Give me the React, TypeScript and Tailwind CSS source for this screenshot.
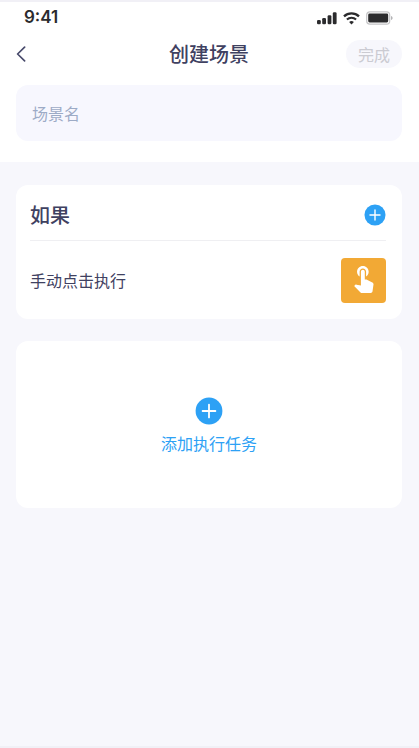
import { useState } from 'react';

function StatusIcons() {
  return (
    <div className="flex items-center gap-1.5 text-[#2b2b2d]">
      <svg width="20" height="14" viewBox="0 0 20 14" fill="currentColor" aria-hidden="true">
        <rect x="0" y="9" width="3.8" height="4.2" rx="1.3" />
        <rect x="5.2" y="7" width="3.8" height="6.2" rx="1.3" />
        <rect x="10.6" y="4.2" width="3.8" height="9" rx="1.3" />
        <rect x="15.800" y="1.2" width="3.8" height="12" rx="1.3" />
      </svg>
      <svg width="17" height="14" viewBox="0 0 17 14" fill="none" stroke="currentColor" aria-hidden="true">
        <path d="M1 5.300a11 11 0 0 1 15 0" strokeWidth="2.300" />
        <path d="M3.900 8.600a6.800 6.800 0 0 1 9.200 0" strokeWidth="2.100" />
        <path d="M8.500 13.400 6.100 11a3.600 3.600 0 0 1 4.800 0Z" fill="currentColor" stroke="none" />
      </svg>
      <svg width="28" height="14" viewBox="0 0 28 14" aria-hidden="true">
        <rect x="0.7" y="0.9" width="23" height="12.2" rx="3.2" fill="none" stroke="#c4c4c6" strokeWidth="1.2" />
        <rect x="2.2" y="2.6" width="20" height="8.8" rx="1.4" fill="currentColor" />
        <path d="M25 5v4c.9-.4 1.600-1.100 1.600-2S25.900 5.400 25 5Z" fill="#b4b4b6" />
      </svg>
    </div>
  );
}

function PlusIcon({ className }: { className: string }) {
  return (
    <svg className={className} viewBox="0 0 28 28" aria-hidden="true">
      <circle cx="14" cy="14" r="13.4" fill="#2da1f5" />
      <path d="M14 7.600v12.800M7.600 14h12.800" stroke="#fff" strokeWidth="1.800" strokeLinecap="round" />
    </svg>
  );
}

function TapIcon() {
  return (
    <svg className="size-[31px]" viewBox="0 0 24 24" fill="#fff" aria-hidden="true">
      <path d="M9 11.240V7.500C9 6.120 10.120 5 11.500 5S14 6.120 14 7.500v3.740c1.210-.81 2-2.180 2-3.740C16 5.010 13.990 3 11.500 3S7 5.010 7 7.500c0 1.560.79 2.930 2 3.740zm9.840 4.630l-4.540-2.260c-.17-.07-.35-.11-.54-.11H13v-6c0-.83-.67-1.500-1.500-1.500S10 6.670 10 7.500v10.740l-3.430-.72c-.08-.01-.15-.03-.24-.03-.31 0-.59.13-.79.33l-.79.8 4.940 4.940c.27.27.65.44 1.060.44h6.790c.75 0 1.330-.55 1.440-1.280l.75-5.270c.01-.07.02-.14.02-.2 0-.62-.38-1.160-.91-1.380z" />
    </svg>
  );
}

export default function App() {
  const [name, setName] = useState('');

  return (
    <div className="flex min-h-screen flex-col border-y-2 border-[#f1f0f6] bg-[#f7f7fc] font-['Noto_Sans_CJK_SC',sans-serif] text-[#3f4161]">
      <header className="bg-white pr-[17px] pb-[21px] pl-4">
        <div className="flex h-8 items-center justify-between pr-2 pl-2">
          <span className="font-['Inter',sans-serif] text-[17px] font-semibold text-[#2b2b2d]">9:41</span>
          <StatusIcons />
        </div>

        <div className="grid h-10 grid-cols-3 items-center">
          <button type="button" aria-label="返回" className="flex h-8 w-8 items-center">
            <svg width="10" height="16" viewBox="0 0 10 16" fill="none" aria-hidden="true">
              <path d="M8.600 1.200 1.600 8l7 6.800" stroke="#484a6b" strokeWidth="1.700" strokeLinecap="round" strokeLinejoin="round" />
            </svg>
          </button>
          <h1 className="text-center text-xl leading-7 font-medium whitespace-nowrap">创建场景</h1>
          <button
            type="button"
            disabled={name.trim() === ''}
            className="h-7 w-14 justify-self-end rounded-full bg-[#f7f7fc] text-base leading-7 text-[#2da1f5] disabled:text-[#cbcbd2]"
          >
            完成
          </button>
        </div>

        <input
          type="text"
          aria-label="场景名"
          placeholder="场景名"
          value={name}
          onChange={(e) => setName(e.target.value)}
          className="mt-[11px] h-14 w-full rounded-xl bg-[#f7f7fe] px-4 text-base outline-none placeholder:text-[#9dabc6]"
        />
      </header>

      <main className="flex flex-col gap-[22px] pt-[23px] pr-[17px] pl-4">
        <section className="rounded-xl bg-white pr-4 pl-3.5">
          <div className="flex h-14 items-center justify-between border-b border-[#efeff2] pt-1">
            <h2 className="text-xl leading-7 font-medium">如果</h2>
            <button type="button" aria-label="添加条件">
              <PlusIcon className="size-[22px]" />
            </button>
          </div>
          <div className="flex h-[78px] items-center justify-between">
            <span className="text-base">手动点击执行</span>
            <span className="flex size-[45px] justify-center rounded-sm bg-[#f2a935] pt-1">
              <TapIcon />
            </span>
          </div>
        </section>

        <button
          type="button"
          className="flex h-[167px] w-full flex-col items-center justify-center gap-1.5 rounded-xl bg-white pt-0.5 text-base text-[#2da1f5]"
        >
          <PlusIcon className="size-7" />
          添加执行任务
        </button>
      </main>
    </div>
  );
}
